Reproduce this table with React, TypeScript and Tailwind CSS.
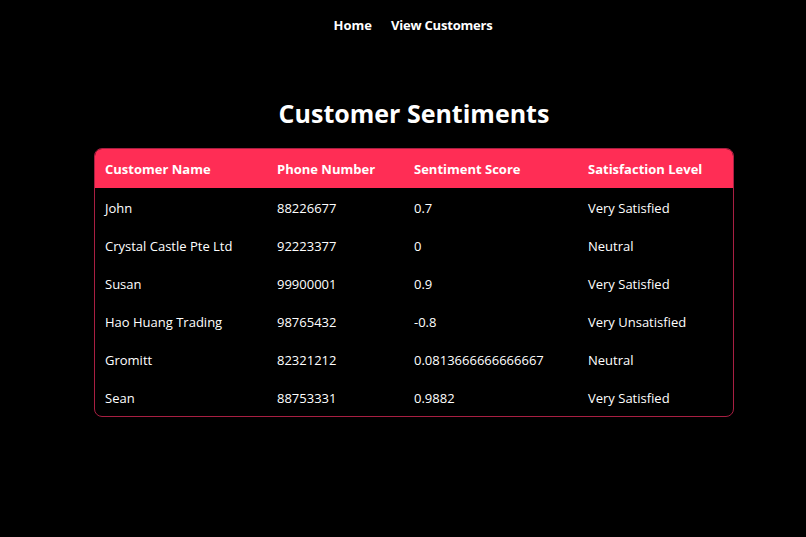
const rows = [
    { name: "John", phone: "88226677", score: "0.7", level: "Very Satisfied" },
    { name: "Crystal Castle Pte Ltd", phone: "92223377", score: "0", level: "Neutral" },
    { name: "Susan", phone: "99900001", score: "0.9", level: "Very Satisfied" },
    { name: "Hao Huang Trading", phone: "98765432", score: "-0.8", level: "Very Unsatisfied" },
    { name: "Gromitt", phone: "82321212", score: "0.0813666666666667", level: "Neutral" },
    { name: "Sean", phone: "88753331", score: "0.9882", level: "Very Satisfied" },
];

export default function App() {
    return (
        <div className="min-h-[537px] bg-black text-white font-['Open_Sans',sans-serif]">
            <div className="ml-[94px] w-[640px]">
                <nav className="flex justify-center gap-[19px] pt-[15px] pr-[8px] text-[13px] font-bold leading-[20px]">
                    <a className="pl-[6px]">Home</a>
                    <a className="tracking-[-0.2px]">View Customers</a>
                </nav>

                <h1 className="mt-[62px] text-center text-[25px] font-bold leading-[32px]">Customer Sentiments</h1>

                <div className="mt-[19px] overflow-hidden rounded-[8px] border border-[#a81f42]">
                    <table className="w-full border-collapse text-left text-[13px]">
                        <thead>
                            <tr className="bg-[#ff2d55] h-[39px]">
                                <th className="w-[172px] pl-[10px] pt-[2px] font-bold">Customer Name</th>
                                <th className="w-[137px] pl-[10px] pt-[2px] font-bold">Phone Number</th>
                                <th className="w-[174px] pl-[10px] pt-[2px] font-bold">Sentiment Score</th>
                                <th className="pl-[10px] pt-[2px] font-bold">Satisfaction Level</th>
                            </tr>
                        </thead>
                        <tbody>
                            {rows.map((r) => (
                                <tr key={r.name} className="h-[38px]">
                                    <td className="pl-[10px] pt-[3px]">{r.name}</td>
                                    <td className="pl-[10px] pt-[3px]">{r.phone}</td>
                                    <td className="pl-[10px] pt-[3px]">{r.score}</td>
                                    <td className="pl-[10px] pt-[3px]">{r.level}</td>
                                </tr>
                            ))}
                        </tbody>
                    </table>
                </div>
            </div>
        </div>
    );
}
